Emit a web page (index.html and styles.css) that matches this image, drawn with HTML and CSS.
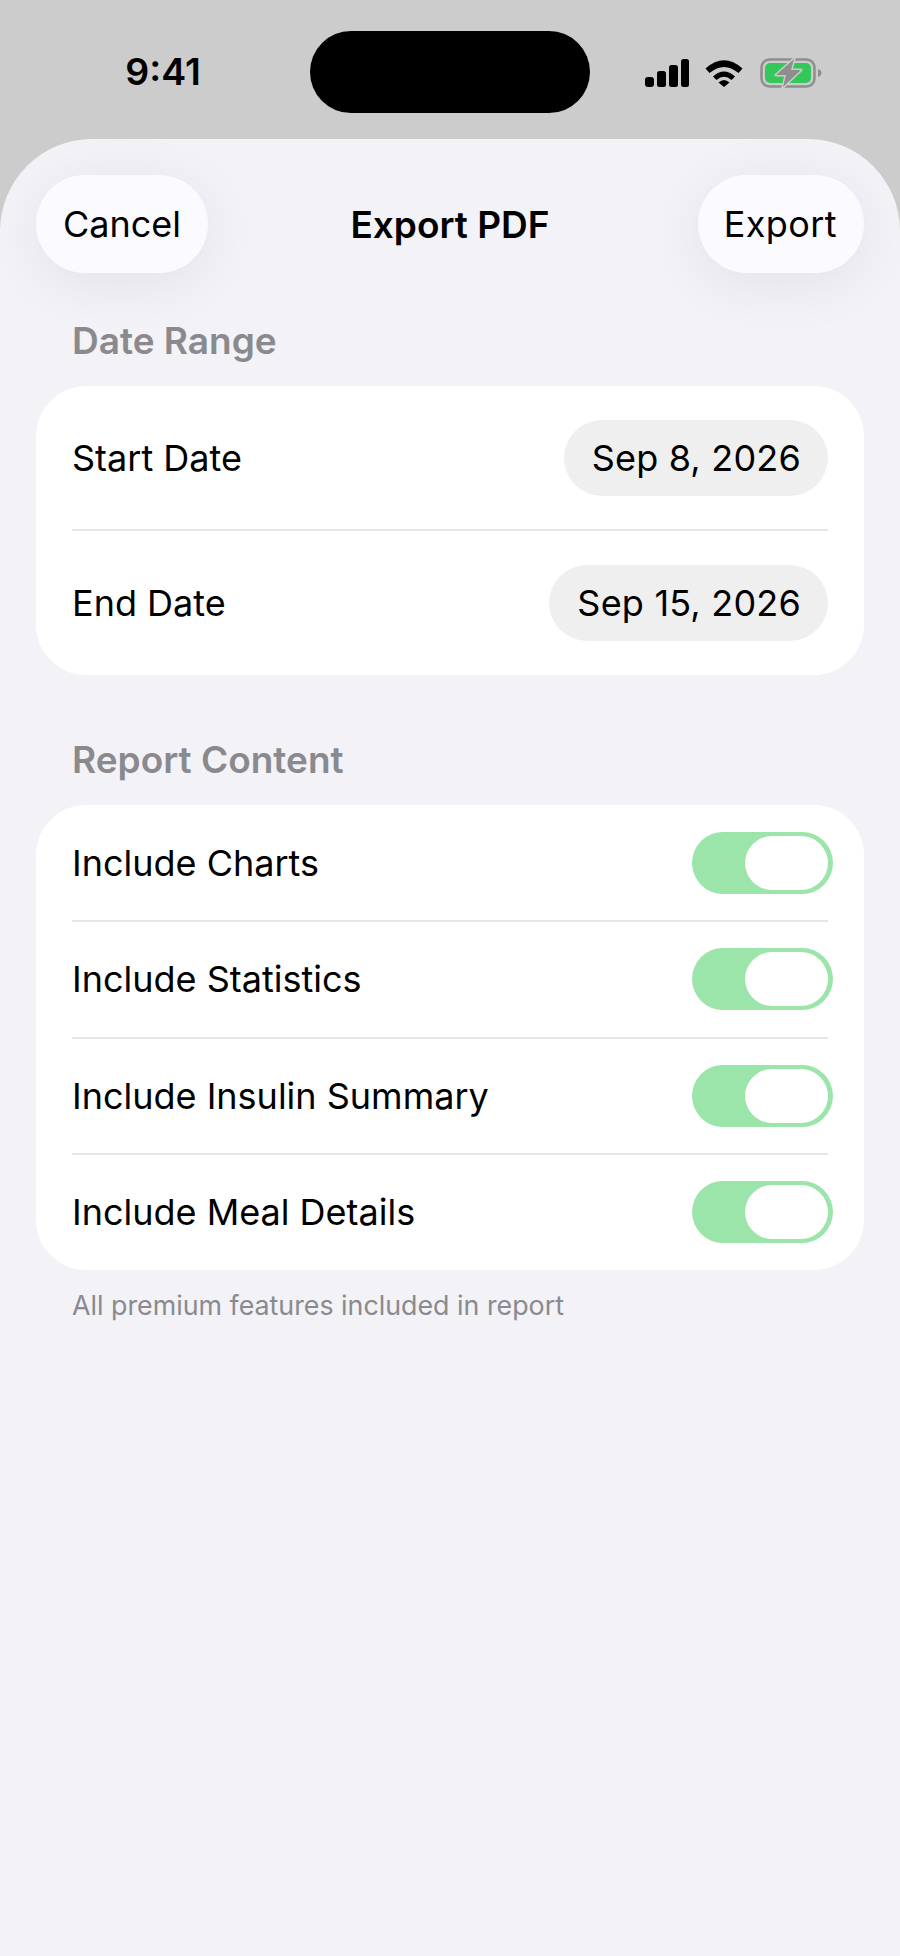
FILE: index.html
```html
<html>
<head>
  <title>Export PDF</title>
  <link rel="stylesheet" href="styles.css">
</head>
<body>
  <div class="status">
    <div class="time">9:41</div>
    <div class="island"></div>
    <div class="status-icons">
      <svg class="signal" width="44" height="28" viewBox="0 0 44 28">
        <rect x="0" y="18" width="9" height="10" rx="3" fill="#000"/>
        <rect x="12" y="12" width="9" height="16" rx="2.5" fill="#000"/>
        <rect x="24" y="6" width="9" height="22" rx="2.5" fill="#000"/>
        <rect x="36" y="0" width="8" height="28" rx="2.5" fill="#000"/>
      </svg>
      <svg class="wifi" width="38" height="28" viewBox="0 0 38 28">
        <path d="M0.500 9.500 Q19 -7 37.500 9.500 L33.500 14 Q19 2 4.500 14 Z" fill="#000"/>
        <path d="M8 17.500 Q19 7.500 30 17.500 L26.500 21 Q19 14.500 11.500 21 Z" fill="#000"/>
        <path d="M19 28 L13.500 23.500 Q19 18.500 24.500 23.500 Z" fill="#000"/>
      </svg>
      <svg class="battery" width="62" height="30" viewBox="0 0 62 30">
        <rect x="1.500" y="1.500" width="53" height="27" rx="8" fill="none" stroke="#8e8e8e" stroke-width="2.500"/>
        <rect x="5" y="5" width="46" height="20" rx="5" fill="#34c759"/>
        <path d="M58 11 Q61.500 12.500 61.500 15 Q61.500 17.500 58 19 Z" fill="#8e8e8e"/>
        <path d="M34 1 L16 17 L26 17 L23 29 L41 12 L31 12 Z" fill="#8e8e8e" stroke="#ccc" stroke-width="3" stroke-linejoin="round" paint-order="stroke"/>
      </svg>
    </div>
  </div>

  <div class="sheet">
    <div class="nav">
      <button class="nav-btn cancel">Cancel</button>
      <div class="nav-title">Export PDF</div>
      <button class="nav-btn export">Export</button>
    </div>

    <div class="section-title first">Date Range</div>
    <div class="card">
      <div class="row date-row">
        <span>Start Date</span>
        <span class="pill">Sep 8, 2026</span>
      </div>
      <div class="row date-row">
        <span>End Date</span>
        <span class="pill">Sep 15, 2026</span>
      </div>
    </div>

    <div class="section-title">Report Content</div>
    <div class="card">
      <div class="row toggle-row">
        <span>Include Charts</span>
        <span class="toggle"><span class="knob"></span></span>
      </div>
      <div class="row toggle-row">
        <span>Include Statistics</span>
        <span class="toggle"><span class="knob"></span></span>
      </div>
      <div class="row toggle-row">
        <span>Include Insulin Summary</span>
        <span class="toggle"><span class="knob"></span></span>
      </div>
      <div class="row toggle-row">
        <span>Include Meal Details</span>
        <span class="toggle"><span class="knob"></span></span>
      </div>
    </div>
    <p class="note">All premium features included in report</p>
  </div>
</body>
</html>
```

FILE: styles.css
```css
html, body { margin: 0; height: 100%; }
body {
  background: #cccccc; font-family: Inter, "Noto Sans", sans-serif; color: #000;
  display: flex; flex-direction: column; height: 1956px; overflow: hidden;
}

/* status bar */
.status { height: 139px; flex: none; display: flex; align-items: flex-start; position: relative; }
.time { width: 326px; text-align: center; font-size: 37.500px; font-weight: 600; line-height: 44px; margin-top: 50px; }
.island { position: absolute; left: 310px; top: 31px; width: 280px; height: 82px; background: #000; border-radius: 41px; }
.status-icons { margin-left: 319px; margin-top: 58px; display: flex; align-items: center; }
.signal { margin-right: 16px; }
.wifi { margin-right: 17px; }

/* sheet */
.sheet { flex: 1; background: #f2f2f7; border-radius: 92px 92px 0 0; padding: 36px 36px 0; }
.nav { display: grid; grid-template-columns: 1fr auto 1fr; align-items: center; }
.nav-btn {
  height: 98px; padding: 0 27px; border: none; border-radius: 49px; background: #fbfbff;
  font-family: inherit; font-size: 36px; color: #000;
  box-shadow: 0 10px 60px rgba(0, 0, 0, 0.07);
}
.cancel { justify-self: start; }
.export { justify-self: end; letter-spacing: 0.400px; padding-left: 26px; }
.nav-title { font-size: 37px; font-weight: 600; }

.section-title { font-size: 37px; font-weight: 600; color: #8a8a8e; line-height: 42px; padding-left: 36px; margin: 64px 0 24px; }
.section-title.first { margin-top: 47px; }

.card { background: #fff; border-radius: 50px; padding: 0 36px; }
.row { display: flex; justify-content: space-between; align-items: center; font-size: 36px; box-sizing: border-box; }
.row + .row { border-top: 2px solid #e6e6e9; }
.date-row { height: 146px; }
.date-row:first-child { height: 143px; }
.toggle-row { height: 116.500px; }
.toggle-row:first-child { height: 115px; }
.pill { background: #efeff0; border-radius: 38px; height: 76px; line-height: 76px; padding: 0 27px 0 28px; letter-spacing: 0.200px; }
.toggle { width: 141px; height: 62px; border-radius: 31px; background: #9be5ab; margin-right: -5px; position: relative; }
.knob { position: absolute; right: 5px; top: 4px; width: 83px; height: 54px; border-radius: 27px; background: #fff; }
.note { margin: 17px 0 0 36px; font-size: 26.800px; line-height: 36px; color: #8a8a8e; }
```
